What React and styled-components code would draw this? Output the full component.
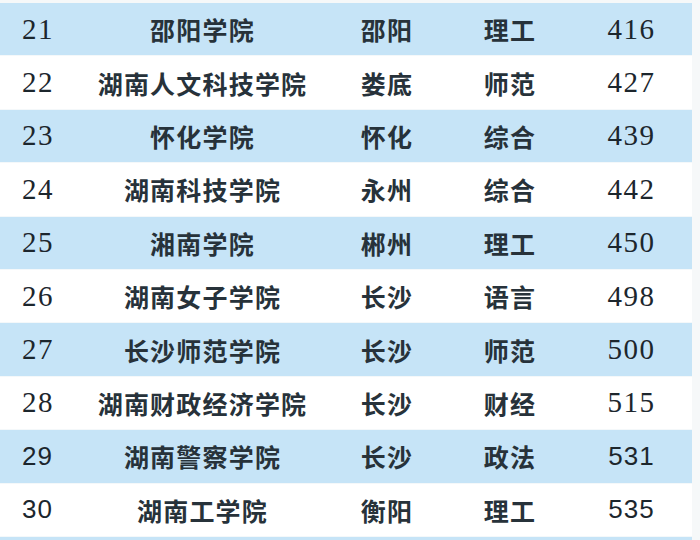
import styled, { createGlobalStyle } from "styled-components";

const Global = createGlobalStyle`
  html, body {
    margin: 0;
    padding: 0;
    background: #f6f8f9;
  }
`

const Page = styled.div`
  width: 700px;
  height: 540px;
  overflow: hidden;
  padding-top: 3px;
  box-sizing: border-box;
  background: #f6f8f9;
`

const Table = styled.div`
  width: 692px;
  display: flex;
  flex-direction: column;
`

const Row = styled.div`
  display: grid;
  grid-template-columns: 80px 245px 124px 122px 121px;
  align-items: center;
  height: 53.4px;
  box-sizing: border-box;
  border-bottom: 1.5px solid #f4f8fa;
  background: ${(p) => (p.$blue ? "#c6e4f7" : "#ffffff")};
  color: #1c262d;
`

const Num = styled.div`
  font-family: ${(p) => (p.$sans ? '"Liberation Sans", Arial, sans-serif' : '"Liberation Serif", "DejaVu Serif", serif')};
  font-size: ${(p) => (p.$sans ? "26px" : "29px")};
  letter-spacing: ${(p) => (p.$sans ? "1px" : "1.5px")};
  padding-left: ${(p) => (p.$left ? "22px" : "0")};
  text-align: ${(p) => (p.$left ? "left" : "center")};
`

const Cell = styled.div`
  font-family: "Noto Sans CJK SC", "Noto Sans", sans-serif;
  font-weight: 700;
  font-size: 25px;
  letter-spacing: 1.2px;
  text-align: center;
  color: #27323a;
`

const rows = [
  ["21", "邵阳学院", "邵阳", "理工", "416"],
  ["22", "湖南人文科技学院", "娄底", "师范", "427"],
  ["23", "怀化学院", "怀化", "综合", "439"],
  ["24", "湖南科技学院", "永州", "综合", "442"],
  ["25", "湘南学院", "郴州", "理工", "450"],
  ["26", "湖南女子学院", "长沙", "语言", "498"],
  ["27", "长沙师范学院", "长沙", "师范", "500"],
  ["28", "湖南财政经济学院", "长沙", "财经", "515"],
  ["29", "湖南警察学院", "长沙", "政法", "531"],
  ["30", "湖南工学院", "衡阳", "理工", "535"],
]

function App() {
  return (
    <Page>
      <Global />
      <Table>
        {rows.map((r, i) => (
          <Row key={r[0]} $blue={i % 2 === 0}>
            <Num $left $sans={i >= 8}>{r[0]}</Num>
            <Cell>{r[1]}</Cell>
            <Cell>{r[2]}</Cell>
            <Cell>{r[3]}</Cell>
            <Num $sans={i >= 8}>{r[4]}</Num>
          </Row>
        ))}
        <Row $blue />
      </Table>
    </Page>
  )
}

export default App;
